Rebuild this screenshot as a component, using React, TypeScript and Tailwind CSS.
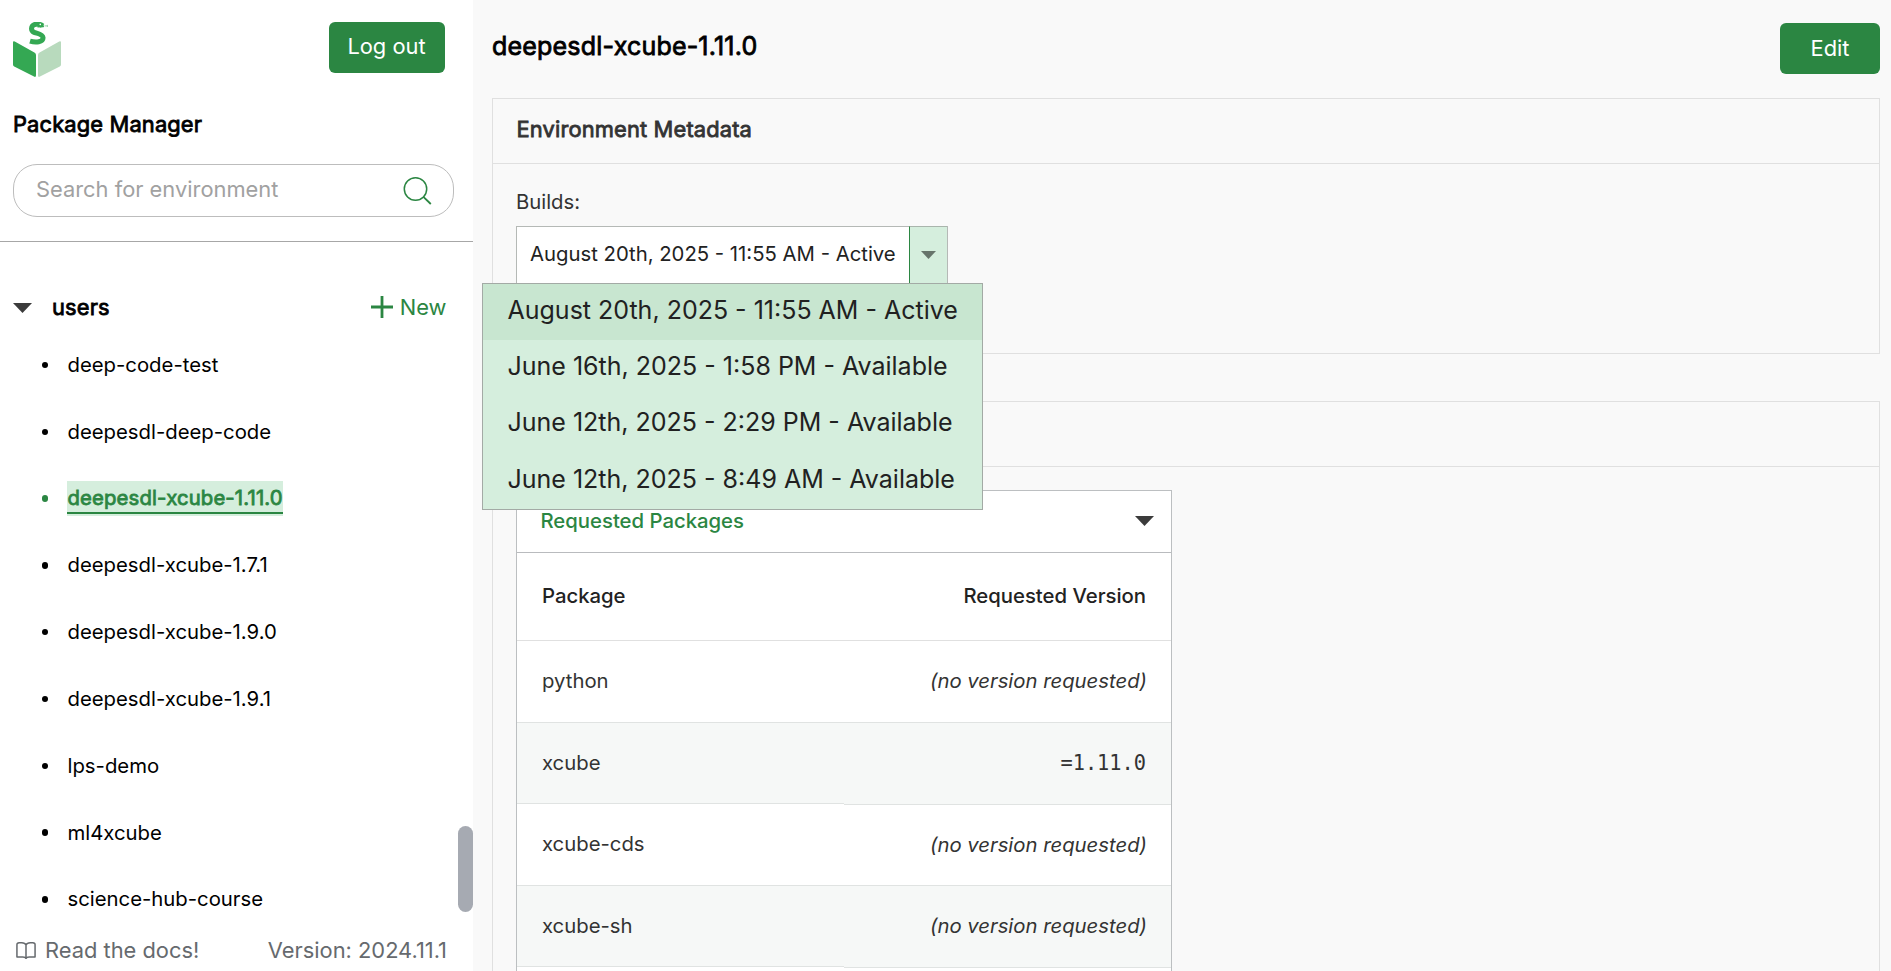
import type { ReactNode } from "react";

const environments = [
  "deep-code-test",
  "deepesdl-deep-code",
  "deepesdl-xcube-1.11.0",
  "deepesdl-xcube-1.7.1",
  "deepesdl-xcube-1.9.0",
  "deepesdl-xcube-1.9.1",
  "lps-demo",
  "ml4xcube",
  "science-hub-course",
];

const selected = "deepesdl-xcube-1.11.0";

const builds = [
  "August 20th, 2025 - 11:55 AM - Active",
  "June 16th, 2025 - 1:58 PM - Available",
  "June 12th, 2025 - 2:29 PM - Available",
  "June 12th, 2025 - 8:49 AM - Available",
];

const packages = [
  { name: "python", version: "", nameCell: "h-[82px]", versionCell: "h-[82px]" },
  { name: "xcube", version: "=1.11.0", nameCell: "h-[81px]", versionCell: "h-[82px]" },
  { name: "xcube-cds", version: "", nameCell: "h-[82px]", versionCell: "h-[81px]" },
  { name: "xcube-sh", version: "", nameCell: "h-[81px]", versionCell: "h-[82px]" },
];

function Logo() {
  return (
    <svg width="50" height="57" viewBox="0 0 50 57" className="block">
      <path d="M0 20.6Q0 18.6 1.8 19.5L21.4 30.4Q23 31.3 23 33V53.2Q23 55.6 21 54.6L1.2 44.6Q0 44 0 42.6Z" fill="#34a853" />
      <path d="M48 20.6Q48 18.6 46.2 19.5L26.6 30.4Q25 31.3 25 33V53.2Q25 55.6 27 54.6L46.8 44.6Q48 44 48 42.6Z" fill="#b8dabd" />
      <path d="M29.6 3.9C27.6 2 23.8 1.7 21.4 2.6C17.8 4 17.6 8.6 20.8 10.2C23.2 11.5 29.6 11.6 30 15.6C30.4 20.4 22.6 20.8 17 19.2" fill="none" stroke="#34a853" strokeWidth="5" />
      <path d="M24 0Q29.5 -0.4 31 4.2L30.6 5.3L24.5 5.6Z" fill="#34a853" />
      <circle cx="27.3" cy="2.4" r="0.8" fill="#fff" />
      <path d="M31.5 3.9H33.6L35 3.1M33.6 3.9L35 4.7" stroke="#8fcf9f" strokeWidth="0.9" fill="none" />
    </svg>
  );
}

function Panel({ title, children, className }: { title?: string; children: ReactNode; className: string }) {
  return (
    <section className={`border border-[#e0e0e0] ${className}`}>
      <h2 className="flex h-[65px] items-center border-b border-[#e0e0e0] pl-[23.5px] pb-[3px] text-[21.875px] font-normal tracking-[0.15px] text-[#333] [-webkit-text-stroke:0.8px_#333]">
        {title}
      </h2>
      {children}
    </section>
  );
}

function Sidebar() {
  return (
    <aside className="flex h-full w-[473px] shrink-0 flex-col bg-white">
      <div className="flex h-[73px] items-start justify-between pt-[22px] pl-[13px] pr-7">
        <Logo />
        <button className="h-[51px] w-[116px] rounded-[6px] bg-[#2b8642] pr-px pb-[3px] text-[21.875px] text-white">Log out</button>
      </div>
      <h1 className="mt-[34px] pl-[13px] text-[21.875px] leading-[34px] font-normal tracking-[0.15px] [-webkit-text-stroke:0.8px_#000]">
        Package Manager
      </h1>
      <div className="mx-[13px] mt-[23px] flex h-[53px] w-[441px] shrink-0 items-center justify-between rounded-[24px] border border-[#bdbdbd] pr-[21px] pl-[22px] text-[21.875px] text-[#a1a1a1]">
        <span className="pb-[3px]">Search for environment</span>
        <svg width="29" height="29" viewBox="0 0 29 29" fill="none" stroke="#2b8642" strokeWidth="1.5">
          <circle cx="12.5" cy="13" r="11.2" />
          <path d="M20.4 20.9L27.8 28" strokeWidth="1.8" />
        </svg>
      </div>
      <div className="mt-6 h-px w-full shrink-0 bg-[#a7a7a7]" />
      <div className="relative flex min-h-0 flex-1 flex-col">
        <div className="mt-[41px] flex h-[48.6px] shrink-0 items-center pr-[26.5px] pl-[13px]">
          <svg width="19" height="10" viewBox="0 0 19 10" className="mt-px">
            <path d="M0 0H19L9.5 10Z" fill="#3b3b3b" />
          </svg>
          <span className="ml-5 text-[21.875px] tracking-[0.15px] [-webkit-text-stroke:0.8px_#000]">users</span>
          <span className="ml-auto flex items-center gap-[7px] text-[21.875px] text-[#2b8642]">
            <svg width="22" height="22" viewBox="0 0 22 22" stroke="#2b8642" strokeWidth="2.8">
              <path d="M11 0V22M0 11H22" />
            </svg>
            New
          </span>
        </div>
        <ul>
          {environments.map((name) => (
            <li key={name} className="flex h-[66.8px] items-center pl-[41.5px] text-[20.3125px] leading-[34px] whitespace-nowrap">
              <span className={`mr-[19px] size-[6.5px] rounded-full ${name === selected ? "bg-[#2b8642]" : "bg-black"}`} />
              {name === selected ? (
                <span className="h-[35px] w-[216px] bg-[#d5eedd]">
                  <span className="block h-[33px] border-b-2 border-[#2b8642] pl-[0.5px] tracking-[0.15px] text-[#2b8642] [-webkit-text-stroke:0.8px_#2b8642]">
                    {name}
                  </span>
                </span>
              ) : (
                <span className="pl-[0.5px]">{name}</span>
              )}
            </li>
          ))}
        </ul>
        <div className="absolute right-0 bottom-[59px] h-[86px] w-[15px] rounded-full bg-[#a6aab2]" />
        <div className="absolute bottom-0 left-0 flex h-[42px] w-[473px] items-center bg-white pr-[26px] pl-[15.5px] text-[21.875px] text-[#666a6e]">
          <svg width="20" height="17" viewBox="0 0 21 18" fill="none" stroke="#666a6e" strokeWidth="1.6" strokeLinejoin="round">
            <path d="M10.5 3.2C9.8 1.6 8.2 0.9 6 0.9H3.2C1.6 0.9 0.9 1.7 0.9 3V15.8H7C9 15.8 10.2 16.4 10.5 17.6C10.8 16.4 12 15.8 14 15.8H20.1V3C20.1 1.7 19.4 0.9 17.8 0.9H15C12.8 0.9 11.2 1.6 10.5 3.2ZM10.5 3.2V17.2" />
          </svg>
          <span className="ml-[9.5px]">Read the docs!</span>
          <span className="ml-auto">Version: 2024.11.1</span>
        </div>
      </div>
    </aside>
  );
}

function BuildSelect() {
  return (
    <div className="relative w-fit">
      <div className="flex h-[58px] w-[432px] border border-[#b5b9b6] bg-white">
        <span className="flex w-[392px] items-center pb-[2px] pl-[13px] text-[20.3125px] whitespace-nowrap text-[#222]">{builds[0]}</span>
        <span className="-my-px flex w-[38px] items-center justify-center border-y border-l border-y-[#a9b5ac] border-l-[#2b8642] bg-[#d5eedd] pb-px">
          <svg width="15" height="8" viewBox="0 0 15 8">
            <path d="M0 0H15L7.5 8Z" fill="#67746b" />
          </svg>
        </span>
      </div>
      <ul className="absolute top-[57px] -left-[34px] z-10 h-[227px] w-[501px] border border-[#a3aaa5] bg-[#d5eedd] text-[25px] text-[#212121]">
        {builds.map((build, i) => (
          <li
            key={build}
            className={`flex h-[56.25px] items-center pb-[3px] pl-[24.5px] whitespace-nowrap ${i === 0 ? "bg-[#c8e6d0]" : ""}`}
          >
            {build}
          </li>
        ))}
      </ul>
    </div>
  );
}

function PackageTable() {
  return (
    <div className="w-[656px] border border-[#bcbfc1] bg-white text-[20.3125px]">
      <div className="flex h-[62px] items-center justify-between border-b border-[#b9bbbe] pr-[17px] pb-px pl-[23.5px] font-medium text-[#2b8642]">
        <span>Requested Packages</span>
        <svg width="19" height="10" viewBox="0 0 19 10">
          <path d="M0 0H19L9.5 10Z" fill="#3b3b3b" />
        </svg>
      </div>
      <div className="flex h-[88px] items-center justify-between border-b border-[#e0e0e0] px-[25px] font-medium text-[#222]">
        <span>Package</span>
        <span>Requested Version</span>
      </div>
      <div className="grid h-[500px] grid-cols-2 text-[#333]">
        <div>
          {packages.map((p, i) => (
            <div
              key={p.name}
              className={`flex items-center border-b border-[#e0e3e2] pl-[25px] ${p.nameCell} ${i % 2 ? "bg-[#f6f8f7]" : ""}`}
            >
              {p.name}
            </div>
          ))}
        </div>
        <div>
          {packages.map((p, i) => (
            <div
              key={p.name}
              className={`flex items-center justify-end border-b border-[#e0e3e2] pr-6 ${p.versionCell} ${i % 2 ? "bg-[#f6f8f7]" : ""}`}
            >
              {p.version ? (
                <span className="pr-px font-['DejaVu_Sans_Mono',monospace]">{p.version}</span>
              ) : (
                <span className="italic">(no version requested)</span>
              )}
            </div>
          ))}
        </div>
      </div>
    </div>
  );
}

export default function App() {
  return (
    <div className="flex h-[971px] w-full overflow-hidden bg-[#f9f9f9] font-['Inter',sans-serif] text-black">
      <Sidebar />
      <main className="flex h-full min-w-0 flex-1 flex-col overflow-hidden pr-[11px] pl-[19px]">
        <header className="flex h-[98px] shrink-0 items-start justify-between pt-[23px]">
          <span className="flex h-[51px] items-center pb-[3px] text-[25px] tracking-[0.2px] [-webkit-text-stroke:0.8px_#000]">{selected}</span>
          <button className="h-[51px] w-[100px] rounded-[6px] bg-[#2b8642] text-[21.875px] text-white">Edit</button>
        </header>
        <Panel title="Environment Metadata" className="h-[256px] shrink-0">
          <div className="pt-[21px] pl-[23px]">
            <div className="h-[41px] text-[20.3125px] leading-[34px] text-[#333]">Builds:</div>
            <BuildSelect />
          </div>
        </Panel>
        <Panel className="mt-[47px] h-[700px] shrink-0">
          <div className="pt-[23px] pl-[23px]">
            <PackageTable />
          </div>
        </Panel>
      </main>
    </div>
  );
}
